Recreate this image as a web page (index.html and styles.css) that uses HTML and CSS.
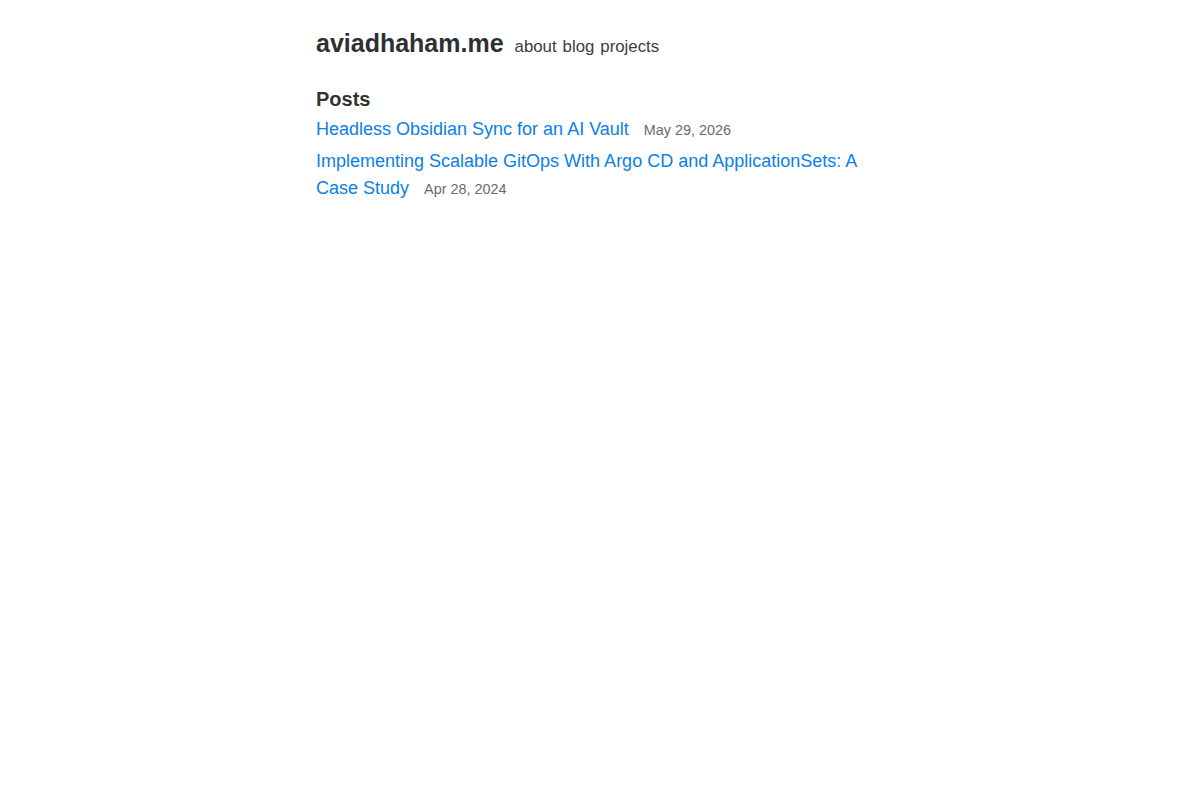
FILE: index.html
```html
<!DOCTYPE html>
<html lang="en">
<head>
<meta charset="utf-8">
<title>aviadhaham.me</title>
<link rel="stylesheet" href="styles.css">
</head>
<body>
<div class="wrap">
  <header class="site-header">
    <a class="brand" href="#">aviadhaham.me</a>
    <nav class="nav">
      <a href="#">about</a>
      <a href="#">blog</a>
      <a href="#">projects</a>
    </nav>
  </header>
  <main>
    <h2 class="section-title">Posts</h2>
    <ul class="posts">
      <li><a href="#">Headless Obsidian Sync for an AI Vault</a><span class="date">May 29, 2026</span></li>
      <li><a href="#">Implementing Scalable GitOps With Argo CD and ApplicationSets: A Case Study</a><span class="date">Apr 28, 2024</span></li>
    </ul>
  </main>
</div>
</body>
</html>
```

FILE: styles.css
```css
html, body {
  margin: 0;
  padding: 0;
  background: #fff;
}
body {
  font-family: "Liberation Sans", Arial, sans-serif;
  color: #333;
  font-size: 18px;
  line-height: 1.5;
}
.wrap {
  max-width: 568px;
  margin: 0 auto;
  padding: 25px 16px;
}
.site-header {
  display: flex;
  align-items: baseline;
  gap: 11px;
}
.brand {
  font-size: 25px;
  font-weight: bold;
  color: #2c3033;
  text-decoration: none;
}
.nav {
  display: flex;
  gap: 6px;
  font-size: 16.8px;
}
.nav a {
  color: #3a3d40;
  text-decoration: none;
}
.section-title {
  font-size: 20px;
  font-weight: bold;
  margin: 21px 0 2px;
  line-height: 1.5;
  color: #333;
}
.posts {
  list-style: none;
  margin: 0;
  padding: 0;
}
.posts li {
  margin-bottom: 5px;
}
.posts a {
  color: #0a7fe6;
  text-decoration: none;
}
.date {
  font-size: 14.4px;
  line-height: 1;
  color: #6b6b6b;
  margin-left: 15px;
}
```
